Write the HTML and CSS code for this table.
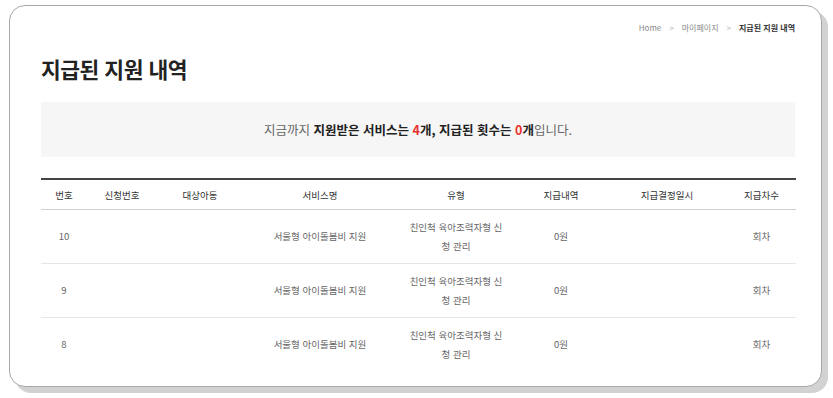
FILE: index.html
```html
<!DOCTYPE html>
<html lang="ko">
<head>
<meta charset="utf-8">
<title>지급된 지원 내역</title>
<link rel="stylesheet" href="styles.css">
</head>
<body>
<div class="frame">
  <div class="card">
    <nav class="crumbs">
      <span>Home</span><span class="sep">&gt;</span><span>마이페이지</span><span class="sep">&gt;</span><span class="cur">지급된 지원 내역</span>
    </nav>
    <h1 class="title">지급된 지원 내역</h1>
    <div class="summary">
      <p class="summary-text">지금까지 <b>지원받은 서비스는 <em>4</em>개, 지급된 횟수는 <em>0</em>개</b>입니다.</p>
    </div>
    <table class="list">
      <colgroup>
        <col style="width:46px"><col style="width:70px"><col style="width:86px"><col style="width:154px">
        <col style="width:118px"><col style="width:92px"><col style="width:120px"><col style="width:69px">
      </colgroup>
      <thead>
        <tr><th>번호</th><th>신청번호</th><th>대상아동</th><th>서비스명</th><th>유형</th><th>지급내역</th><th>지급결정일시</th><th>지급차수</th></tr>
      </thead>
      <tbody>
        <tr><td>10</td><td></td><td></td><td>서울형 아이돌봄비 지원</td><td>친인척 육아조력자형 신청 관리</td><td>0원</td><td></td><td>회차</td></tr>
        <tr><td>9</td><td></td><td></td><td>서울형 아이돌봄비 지원</td><td>친인척 육아조력자형 신청 관리</td><td>0원</td><td></td><td>회차</td></tr>
        <tr><td>8</td><td></td><td></td><td>서울형 아이돌봄비 지원</td><td>친인척 육아조력자형 신청 관리</td><td>0원</td><td></td><td>회차</td></tr>
      </tbody>
    </table>
  </div>
</div>
</body>
</html>
```
FILE: styles.css
```css
html, body {
  margin: 0;
  padding: 0;
  background: #fff;
}
body {
  font-family: "Noto Sans CJK KR", "Noto Sans", sans-serif;
  color: #333;
}
.frame {
  padding: 5px 11px 0 9px;
  height: 398px;
  box-sizing: border-box;
  overflow: hidden;
}
.card {
  height: 382px;
  box-sizing: border-box;
  border: 1px solid #a8a8a8;
  border-radius: 16px;
  box-shadow: 6px 6px 0 #d2d2d2;
  background: #fff;
  padding: 15px 26px 0 31px;
  overflow: hidden;
}
.crumbs {
  display: flex;
  justify-content: flex-end;
  align-items: center;
  gap: 8px;
  font-size: 8px;
  line-height: 14px;
  color: #8a8a8a;
}
.crumbs .sep { color: #aaa; }
.crumbs .cur { color: #333; font-weight: 700; }
.title {
  margin: 19px 0 0;
  font-size: 21.5px;
  line-height: 30px;
  font-weight: 700;
  color: #222;
  letter-spacing: -0.5px;
}
.summary {
  margin-top: 18px;
  height: 55px;
  background: #f6f6f6;
  display: flex;
  align-items: center;
  justify-content: center;
}
.summary-text {
  margin: 0;
  font-size: 12.5px;
  color: #666;
}
.summary-text b { color: #222; font-weight: 700; }
.summary-text em { font-style: normal; color: #e8322f; }
.list {
  margin-top: 21px;
  width: 755px;
  border-collapse: collapse;
  table-layout: fixed;
  border-top: 2px solid #444;
  font-size: 9.5px;
}
.list th {
  height: 29px;
  font-weight: 400;
  color: #333;
  border-bottom: 1px solid #c9d0d6;
  padding: 0;
}
.list td {
  height: 53px;
  padding: 0 10px;
  text-align: center;
  color: #666;
  line-height: 19px;
  border-bottom: 1px solid #e6e6e6;
}
.list tbody tr:last-child td { border-bottom: 0; }
```
